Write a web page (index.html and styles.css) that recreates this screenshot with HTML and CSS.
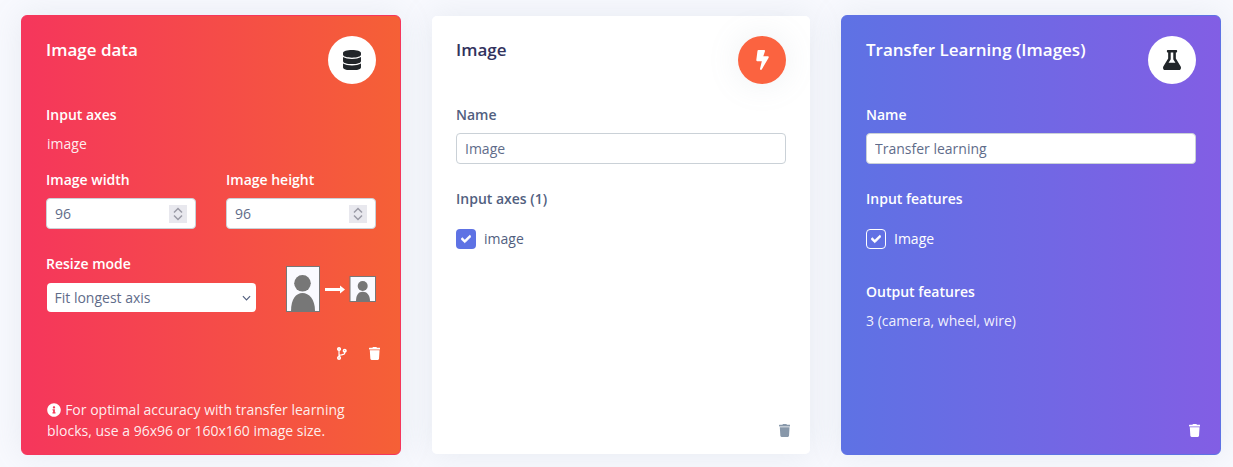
FILE: index.html
```html
<!DOCTYPE html>
<html lang="en">
<head>
<meta charset="utf-8">
<title>Impulse design</title>
<link rel="stylesheet" href="styles.css">
</head>
<body>
<main class="blocks">
  <section class="card card-red">
    <header class="card-head">
      <h3 class="card-title">Image data</h3>
      <span class="badge badge-white">
        <svg class="badge-icon" viewBox="0 0 448 512"><path d="M448 73.143v45.714C448 159.143 347.667 192 224 192S0 159.143 0 118.857V73.143C0 32.857 100.333 0 224 0s224 32.857 224 73.143zM448 176v102.857C448 319.143 347.667 352 224 352S0 319.143 0 278.857V176c48.125 33.143 136.208 48.572 224 48.572S399.874 209.143 448 176zm0 160v102.857C448 479.143 347.667 512 224 512S0 479.143 0 438.857V336c48.125 33.143 136.208 48.572 224 48.572S399.874 369.143 448 336z"/></svg>
      </span>
    </header>
    <div class="label first">Input axes</div>
    <div class="plain">image</div>
    <div class="two-col">
      <div>
        <label class="label">Image width</label>
        <div class="num-wrap">
          <input class="field" type="text" value="96">
          <span class="spinner"><svg viewBox="0 0 18 18"><path d="M5 7.500 9 3.500l4 4M5 10.500l4 4 4-4" fill="none" stroke="#9a9aa6" stroke-width="1.500"/></svg></span>
        </div>
      </div>
      <div>
        <label class="label">Image height</label>
        <div class="num-wrap">
          <input class="field" type="text" value="96">
          <span class="spinner"><svg viewBox="0 0 18 18"><path d="M5 7.500 9 3.500l4 4M5 10.500l4 4 4-4" fill="none" stroke="#9a9aa6" stroke-width="1.500"/></svg></span>
        </div>
      </div>
    </div>
    <div class="resize-row">
      <div class="resize-col">
        <label class="label">Resize mode</label>
        <div class="select-wrap">
          <select class="select"><option>Fit longest axis</option></select>
          <svg class="select-chev" viewBox="0 0 10 6"><path d="M1 1l4 4 4-4" fill="none" stroke="#525f7f" stroke-width="1.300"/></svg>
        </div>
      </div>
      <svg class="resize-pic" viewBox="0 0 90 46">
        <rect x="0.500" y="0.500" width="33" height="45" fill="#fafaff" stroke="#777"/>
        <circle cx="16.500" cy="17.300" r="8.300" fill="#777"/>
        <path d="M5 45c0-12 5-18 11.500-18S29 33 29 45z" fill="#777"/>
        <path d="M39 22h15v-2.500l5 4-5 4V25H39z" fill="#fff"/>
        <rect x="64" y="10.500" width="25.500" height="25" fill="#fafaff" stroke="#777"/>
        <circle cx="76.700" cy="20" r="5" fill="#777"/>
        <path d="M70 35c0-6 2.500-9.300 6.700-9.300S84 29 84 35z" fill="#777"/>
      </svg>
    </div>
    <div class="actions actions-red">
      <svg class="act-icon" viewBox="0 0 384 512"><path d="M384 144c0-44.200-35.800-80-80-80s-80 35.800-80 80c0 36.400 24.300 67.100 57.500 76.800-.6 16.100-4.200 28.500-11 36.900-15.400 19.200-49.300 22.400-85.200 25.700-28.200 2.600-57.400 5.400-81.300 16.900v-144c32.500-10.200 56-40.500 56-76.300 0-44.200-35.800-80-80-80S0 35.800 0 80c0 35.800 23.500 66.100 56 76.300v199.300C23.500 365.900 0 396.200 0 432c0 44.200 35.800 80 80 80s80-35.800 80-80c0-34-21.200-63.100-51.200-74.600 3.100-5.200 7.800-9.800 14.900-13.400 16.200-8.200 40.400-10.400 66.100-12.800 42.200-3.900 90-8.400 118.200-43.400 14-17.400 21.100-39.800 21.600-67.900 31.600-10.800 54.400-40.700 54.400-75.900zM80 64c8.800 0 16 7.200 16 16s-7.200 16-16 16-16-7.200-16-16 7.200-16 16-16zm0 384c-8.800 0-16-7.200-16-16s7.200-16 16-16 16 7.200 16 16-7.200 16-16 16zm224-320c8.800 0 16 7.200 16 16s-7.200 16-16 16-16-7.200-16-16 7.200-16 16-16z"/></svg>
      <svg class="act-icon" viewBox="0 0 448 512"><path d="M432 32H312l-9.400-18.700A24 24 0 0 0 281.100 0H166.800a23.720 23.720 0 0 0-21.400 13.300L136 32H16A16 16 0 0 0 0 48v32a16 16 0 0 0 16 16h416a16 16 0 0 0 16-16V48a16 16 0 0 0-16-16zM53.200 467a48 48 0 0 0 47.900 45h245.800a48 48 0 0 0 47.900-45L416 128H32z"/></svg>
    </div>
    <p class="note">
      <svg class="note-icon" viewBox="0 0 512 512"><path d="M256 8C119.043 8 8 119.083 8 256c0 136.997 111.043 248 248 248s248-111.003 248-248C504 119.083 392.957 8 256 8zm0 110c23.196 0 42 18.804 42 42s-18.804 42-42 42-42-18.804-42-42 18.804-42 42-42zm56 254c0 6.627-5.373 12-12 12h-88c-6.627 0-12-5.373-12-12v-24c0-6.627 5.373-12 12-12h12v-64h-12c-6.627 0-12-5.373-12-12v-24c0-6.627 5.373-12 12-12h64c6.627 0 12 5.373 12 12v100h12c6.627 0 12 5.373 12 12v24z"/></svg>
      For optimal accuracy with transfer learning blocks, use a 96x96 or 160x160 image size.
    </p>
  </section>

  <section class="card card-white">
    <header class="card-head">
      <h3 class="card-title">Image</h3>
      <span class="badge badge-orange">
        <svg class="badge-icon bolt" viewBox="0 0 320 512"><path d="M296 160H180.600l42.600-129.800C227.200 15 215.700 0 200 0H56C44 0 33.800 8.900 32.200 20.800l-32 240C-1.700 275.200 9.500 288 24 288h118.700L96.600 482.500c-3.600 15.200 8 29.500 23.300 29.500 8.400 0 16.400-4.400 20.800-12l176-304c9.300-15.900-2.200-36-20.700-36z"/></svg>
      </span>
    </header>
    <label class="label first">Name</label>
    <input class="field field-wide" type="text" value="Image">
    <div class="label section">Input axes (1)</div>
    <div class="check-row">
      <span class="check check-solid"><svg viewBox="0 0 512 512"><path d="M173.898 439.404l-166.400-166.400c-9.997-9.997-9.997-26.206 0-36.204l36.203-36.204c9.997-9.998 26.207-9.998 36.204 0L192 312.690 432.095 72.596c9.997-9.997 26.207-9.997 36.204 0l36.203 36.204c9.997 9.997 9.997 26.206 0 36.204l-294.400 294.401c-9.998 9.997-26.207 9.997-36.204-.001z"/></svg></span>
      <span class="check-text">image</span>
    </div>
    <div class="actions actions-foot">
      <svg class="act-icon" viewBox="0 0 448 512"><path d="M432 32H312l-9.400-18.700A24 24 0 0 0 281.100 0H166.800a23.720 23.720 0 0 0-21.400 13.300L136 32H16A16 16 0 0 0 0 48v32a16 16 0 0 0 16 16h416a16 16 0 0 0 16-16V48a16 16 0 0 0-16-16zM53.200 467a48 48 0 0 0 47.900 45h245.800a48 48 0 0 0 47.900-45L416 128H32z"/></svg>
    </div>
  </section>

  <section class="card card-blue">
    <header class="card-head">
      <h3 class="card-title">Transfer Learning (Images)</h3>
      <span class="badge badge-white">
        <svg class="badge-icon" viewBox="0 0 448 512"><path d="M437.200 403.500L320 215V64h8c13.300 0 24-10.700 24-24V24c0-13.300-10.700-24-24-24H120c-13.300 0-24 10.700-24 24v16c0 13.300 10.700 24 24 24h8v151L10.800 403.500C-18.500 450.600 15.300 512 70.900 512h306.200c55.700 0 89.400-61.500 60.100-108.500zM137.900 320l48.200-77.600c3.700-5.200 5.800-11.600 5.800-18.400V64h64v160c0 6.900 2.200 13.200 5.800 18.400l48.200 77.600h-172z"/></svg>
      </span>
    </header>
    <label class="label first">Name</label>
    <input class="field field-wide" type="text" value="Transfer learning">
    <div class="label section">Input features</div>
    <div class="check-row">
      <span class="check check-outline"><svg viewBox="0 0 512 512"><path d="M173.898 439.404l-166.400-166.400c-9.997-9.997-9.997-26.206 0-36.204l36.203-36.204c9.997-9.998 26.207-9.998 36.204 0L192 312.690 432.095 72.596c9.997-9.997 26.207-9.997 36.204 0l36.203 36.204c9.997 9.997 9.997 26.206 0 36.204l-294.400 294.401c-9.998 9.997-26.207 9.997-36.204-.001z"/></svg></span>
      <span class="check-text">Image</span>
    </div>
    <div class="label output">Output features</div>
    <div class="plain value">3 (camera, wheel, wire)</div>
    <div class="actions actions-foot">
      <svg class="act-icon" viewBox="0 0 448 512"><path d="M432 32H312l-9.400-18.700A24 24 0 0 0 281.100 0H166.800a23.720 23.720 0 0 0-21.400 13.300L136 32H16A16 16 0 0 0 0 48v32a16 16 0 0 0 16 16h416a16 16 0 0 0 16-16V48a16 16 0 0 0-16-16zM53.200 467a48 48 0 0 0 47.900 45h245.800a48 48 0 0 0 47.900-45L416 128H32z"/></svg>
    </div>
  </section>
</main>
</body>
</html>
```
FILE: styles.css
```css
* { box-sizing: border-box; }
html, body { margin: 0; height: 100%; overflow: hidden; }
body {
  background: #f8f9fe;
  font-family: "Open Sans", "Noto Sans", sans-serif;
  font-size: 14px;
  line-height: 21px;
  color: #525f7f;
}
.blocks {
  display: grid;
  grid-template-columns: repeat(3, 380px);
  gap: 30px;
  padding: 15px 0 0 21px;
}
.card {
  height: 440px;
  border: 1px solid transparent;
  border-radius: 6px;
  padding: 20px 24px 13px;
  display: flex;
  flex-direction: column;
  box-shadow: 0 0 32px 0 rgba(136, 152, 170, .15);
}
.card-red {
  background: linear-gradient(90deg, #f5365c, #f56036);
  border-color: #f5365c;
  color: #fff;
}
.card-blue {
  background: linear-gradient(90deg, #5e72e4, #825ee4);
  border-color: #5e72e4;
  color: #fff;
}
.card-white {
  background: #fff padding-box;
}
.card-head {
  display: flex;
  justify-content: space-between;
  align-items: flex-start;
  height: 48px;
}
.card-title {
  margin: 2px 0 0;
  font-size: 17px;
  line-height: 24px;
  font-weight: 600;
}
.card-white .card-title { color: #32325d; }
.badge {
  width: 48px;
  height: 48px;
  border-radius: 50%;
  display: flex;
  align-items: center;
  justify-content: center;
  flex: none;
}
.badge-white { background: #fff; }
.badge-orange { background: #fb6340; box-shadow: 0 0 32px 0 rgba(136, 152, 170, .15); }
.badge-icon { width: 18px; height: 20.500px; fill: #212529; }
.badge-icon.bolt { width: 13px; height: 20px; fill: #fff; }
.label {
  display: block;
  font-weight: 600;
  margin: 0;
}
.first { margin-top: 20px; }
.section { margin-top: 24px; }
.output { margin-top: 32px; }
.plain { margin-top: 8px; padding-left: 1px; color: rgba(255, 255, 255, .92); }
.plain.value { padding-left: 0; }
.two-col {
  display: grid;
  grid-template-columns: 150px 150px;
  gap: 30px;
  margin-top: 15px;
}
.num-wrap { position: relative; margin-top: 8px; }
.field {
  display: block;
  width: 100%;
  height: 31px;
  border: 1px solid #cad1d7;
  border-radius: 4px;
  background: #fff;
  padding: 0 8px;
  font: inherit;
  color: #5f6c8a;
  outline: none;
}
.field-wide { margin-top: 8px; }
.spinner {
  position: absolute;
  top: 7px;
  right: 9px;
  width: 18px;
  height: 18px;
  background: #e8e8ee;
  display: block;
}
.spinner svg { display: block; width: 18px; height: 18px; }
.resize-row {
  display: flex;
  justify-content: space-between;
  align-items: flex-start;
  margin-top: 24px;
}
.resize-col { width: 210px; }
.select-wrap { position: relative; margin-top: 9px; }
.select {
  display: block;
  appearance: none;
  width: 209px;
  height: 29px;
  margin-left: 0.500px;
  border: 0;
  border-radius: 4px;
  background: #fff;
  padding: 0 8px;
  font: inherit;
  color: #5f6c8a;
}
.select-chev {
  position: absolute;
  right: 5px;
  top: 12px;
  width: 9px;
  height: 6px;
  pointer-events: none;
}
.resize-pic { width: 90px; height: 46px; margin-top: 13px; flex: none; }
.actions {
  display: flex;
  justify-content: flex-end;
  gap: 22px;
  margin-right: -4px;
}
.actions-red { margin-top: 35px; }
.actions-foot { margin-top: auto; margin-bottom: 4px; }
.act-icon { height: 13px; width: auto; fill: #fff; display: block; }
.card-white .act-icon { fill: #8898aa; }
.note {
  margin: auto 0 0;
  padding-left: 1px;
  color: rgba(255, 255, 255, .92);
}
.note-icon { width: 14px; height: 14px; fill: #fff; vertical-align: -2px; margin-right: 0.500px; }
.check-row {
  display: flex;
  align-items: flex-start;
  gap: 8px;
  margin-top: 20px;
  height: 20px;
}
.check-text { line-height: 19px; }
.check {
  width: 20px;
  height: 20px;
  border-radius: 4px;
  display: flex;
  align-items: center;
  justify-content: center;
  flex: none;
}
.check svg { width: 10px; height: 10px; fill: #fff; stroke: #fff; stroke-width: 36px; }
.check-solid { background: #5e72e4; }
.check-outline { border: 1.500px solid #fff; }
```
